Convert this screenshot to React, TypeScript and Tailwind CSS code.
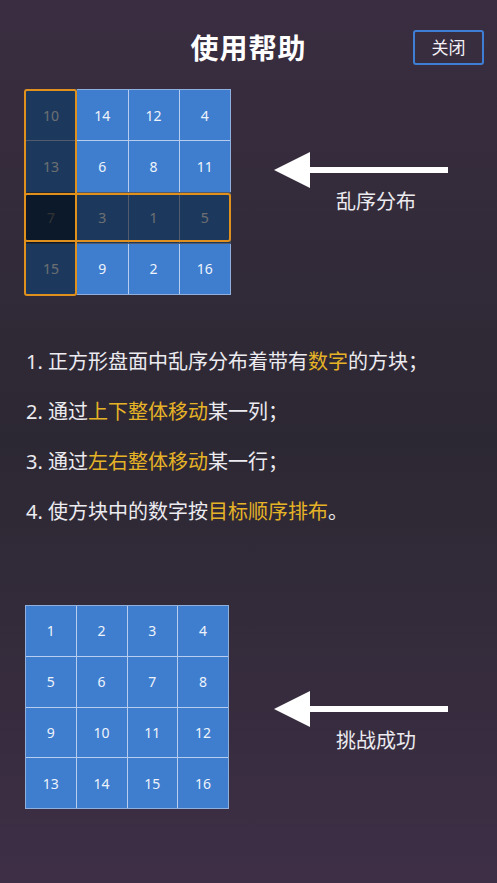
import React from 'react';

const scrambled = [10, 14, 12, 4, 13, 6, 8, 11, 7, 3, 1, 5, 15, 9, 2, 16];
const solved = Array.from({ length: 16 }, (_, i) => i + 1);

const font = { fontFamily: '"Noto Sans", "Noto Sans CJK SC", sans-serif' };

function Board({ nums, size, highlight }: { nums: number[]; size: number; highlight?: boolean }) {
  return (
    <div className="relative shrink-0" style={{ width: size, height: size }}>
      <div className="grid h-full w-full grid-cols-4 grid-rows-4 gap-px border border-[#8fb0de] bg-[#b7cdef]">
        {nums.map((n) => (
          <div
            key={n}
            className="flex items-center justify-center bg-[#3f7ecf] text-[14px] text-[#eef3fb]"
          >
            {n}
          </div>
        ))}
      </div>
      {highlight && (
        <>
          {/* dark overlay on first column and third row, overlapping at the crossing */}
          <div className="absolute left-0 top-0 h-full w-[52px] bg-black/55" />
          <div className="absolute left-0 top-[103px] h-[52px] w-full bg-black/55" />
          <div className="absolute -left-px top-0 h-[207px] w-[53px] rounded-[3px] border-2 border-[#e0901c]" />
          <div className="absolute -left-px top-[104px] h-[49px] w-[207px] rounded-[3px] border-2 border-[#e0901c]" />
        </>
      )}
    </div>
  );
}

function Arrow({ label }: { label: string }) {
  return (
    <div className="flex flex-col">
      <svg width="174" height="36" viewBox="0 0 174 36">
        <polygon points="0,18 36,0 36,36" fill="#ffffff" />
        <rect x="35" y="15" width="139" height="6" fill="#ffffff" />
      </svg>
      <div className="ml-[62px] mt-[2px] text-[20px] leading-[24px] text-[#ecebf0]">{label}</div>
    </div>
  );
}

export default function App() {
  return (
    <div
      className="h-[883px] w-full overflow-hidden bg-gradient-to-b from-[#3a2d41] via-[#2c2833] to-[#3e2f46]"
      style={font}
    >
      <div className="grid h-[89px] grid-cols-[1fr_auto_1fr] items-center pt-[6px]">
        <div />
        <h1 className="text-[28px] font-semibold tracking-[1px] text-white">使用帮助</h1>
        <div className="flex justify-end pr-[13px]">
          <button
            type="button"
            className="flex h-[35px] w-[71px] items-center justify-center rounded-[3px] border-2 border-[#3e7fd5] text-[17px] text-[#f2f0f5]"
          >
            关闭
          </button>
        </div>
      </div>

      <div className="flex pl-[25px]">
        <Board nums={scrambled} size={206} highlight />
        <div className="ml-[43px] pt-[63px]">
          <Arrow label="乱序分布" />
        </div>
      </div>

      <div className="mt-[42px] pl-[26px] text-[20px] leading-[50px] text-[#ecebf0]">
        <p>
          1. 正方形盘面中乱序分布着带有<span className="text-[#e6b326]">数字</span>的方块；
        </p>
        <p>
          2. 通过<span className="text-[#e6b326]">上下整体移动</span>某一列；
        </p>
        <p>
          3. 通过<span className="text-[#e6b326]">左右整体移动</span>某一行；
        </p>
        <p>
          4. 使方块中的数字按<span className="text-[#e6b326]">目标顺序排布</span>。
        </p>
      </div>

      <div className="mt-[68px] flex pl-[25px]">
        <Board nums={solved} size={204} />
        <div className="ml-[45px] pt-[86px]">
          <Arrow label="挑战成功" />
        </div>
      </div>
    </div>
  );
}
